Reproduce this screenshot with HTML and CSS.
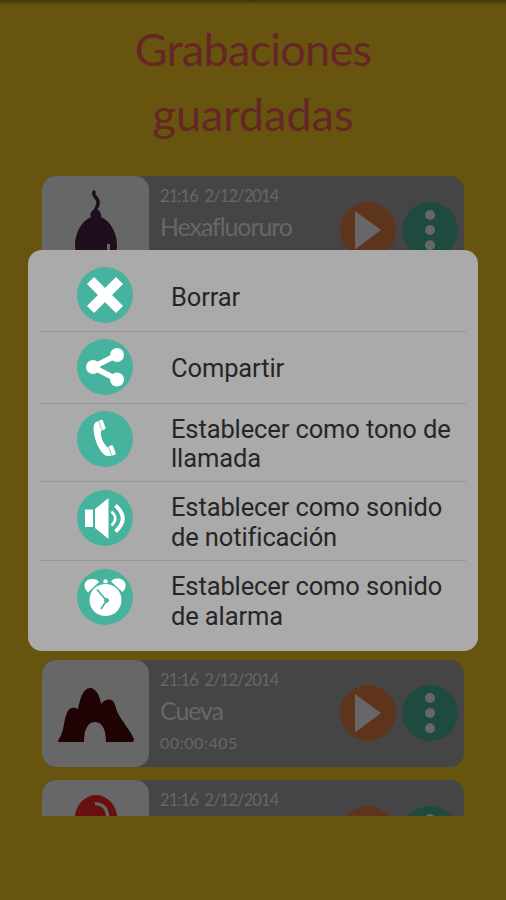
FILE: index.html
```
<!DOCTYPE html>
<html lang="es">
<head>
<meta charset="utf-8">
<title>Grabaciones guardadas</title>
<link rel="stylesheet" href="styles.css">
</head>
<body>
<svg class="defs" width="0" height="0">
  <symbol id="play" viewBox="0 0 56 56"><circle class="orange" cx="28" cy="28" r="28"/><path class="dim" d="M15 9v38.500L41 28z"/></symbol>
  <symbol id="more" viewBox="0 0 56 56"><circle class="green" cx="28" cy="28" r="28"/><g class="dim"><circle cx="28" cy="13" r="5"/><circle cx="28" cy="28" r="5"/><circle cx="28" cy="43.300" r="5"/></g></symbol>
</svg>
<main class="screen">
  <h1 class="title"><span class="t1">Grabaciones</span><br><span class="t2">guardadas</span></h1>
  <section class="list">
    <article class="card first">
      <div class="thumb"><svg viewBox="0 0 107 107"><path d="M52 16c-2 5 6 6 4 12-1 4-3 5-4 10" fill="none" stroke="#200e1e" stroke-width="3.500" stroke-linecap="round"/><path fill="#200e1e" d="M50 35c2-3 7-2 8 1 2 3 1 5 1 5 10 4 16 17 16 28 0 13-9 25-21 25S33 82 33 69c0-11 6-24 16-28-1-2-1-4 1-6z"/><path d="M66.500 68v10" stroke="#676767" stroke-width="3"/></svg></div>
      <div class="info"><div class="date">21:16&nbsp; 2/12/2014</div><div class="name">Hexafluoruro</div></div>
      <div class="actions"><svg><use href="#play"/></svg><svg><use href="#more"/></svg></div>
    </article>
    <article class="card cave">
      <div class="thumb"><svg viewBox="0 0 107 107"><path fill="#200304" d="M18 82c-3 0-2-2-1-3 6-10 4-17 8-26 2-6 7-6 11-4 2-10 5-21 12-21 6 0 10 8 11 16 5-6 12-6 14 1 3 11 7 14 11 21 4 5 6 9 8 13 0 2-1 3-2 3H64c0-11-3-20-11-20S42 71 42 82z"/></svg></div>
      <div class="info"><div class="date">21:16&nbsp; 2/12/2014</div><div class="name">Cueva</div><div class="time">00:00:405</div></div>
      <div class="actions"><svg><use href="#play"/></svg><svg><use href="#more"/></svg></div>
    </article>
    <article class="card balloon">
      <div class="thumb"><svg viewBox="0 0 107 107"><ellipse cx="54" cy="40" rx="21.500" ry="25" fill="#66100f"/><path d="M53 23.500c8 0 12 5 13 14" fill="none" stroke="#676767" stroke-width="3.200"/></svg></div>
      <div class="info"><div class="date">21:16&nbsp; 2/12/2014</div></div>
      <div class="actions"><svg><use href="#play"/></svg><svg><use href="#more"/></svg></div>
    </article>
  </section>
  <ul class="dialog">
    <li class="row"><svg viewBox="0 0 56 56"><circle class="teal" cx="28" cy="28" r="28"/><path d="M13.500 13.500l29 29M42.500 13.500L13.500 42.500" stroke="#fff" stroke-width="10"/></svg><span>Borrar</span></li>
    <li class="row"><svg viewBox="0 0 56 56"><circle class="teal" cx="28" cy="28" r="28"/><path d="M40 16L16 28l24 12.500" fill="none" stroke="#fff" stroke-width="5.500"/><g fill="#fff"><circle cx="40" cy="16" r="7"/><circle cx="16" cy="28" r="7"/><circle cx="40" cy="40.500" r="7"/></g></svg><span>Compartir</span></li>
    <li class="row tall"><svg viewBox="0 0 56 56"><circle class="teal" cx="28" cy="28" r="28"/><path fill="#fff" d="M20 10.500l4.500-1.800c.7-.2 1 0 1.300.7l2.700 7.300c.2.800 0 1.200-.7 1.500L24 20c-.7 6 2 12 6.300 16.200l4.200-2c.7-.3 1.100 0 1.400.6l2.800 7.200c.2.800 0 1.200-.7 1.500-4 2-8 2.500-11 0-7-7-10-17-10.500-26-.1-3 1-6 3.500-7z"/><path d="M21.500 10l3.500 9M31.300 35.500l3.500 9" stroke="#45b39d" stroke-width=".7"/></svg><span>Establecer como tono de llamada</span></li>
    <li class="row tall"><svg viewBox="0 0 56 56"><circle class="teal" cx="28" cy="28" r="28"/><path fill="#fff" d="M8 19.500h8v17.500H8zM18 19L31.500 8v41L18 38z"/><g fill="none" stroke="#fff"><path d="M34.500 21.500q7.500 7 0 14" stroke-width="2.500"/><path d="M38.500 15.500q14.500 13 0 26" stroke-width="4"/></g></svg><span>Establecer como sonido de notificación</span></li>
    <li class="row tall last"><svg viewBox="0 0 56 56"><circle class="teal" cx="28" cy="28" r="28"/><g fill="#fff"><path d="M11 23.500C5 18 7 10 15.500 10c3 0 5.500 1.200 6.500 3zM45.500 23c6-5.500 3-13.500-5-13.500-3 0-5.500 1.200-6.500 3z"/><circle cx="28.500" cy="12.500" r="2.200"/><circle cx="28.500" cy="31" r="16.500" stroke="#45b39d" stroke-width="1"/></g><path d="M20 20.500L29.500 31.500 24 40" fill="none" stroke="#45b39d" stroke-width="1.700"/><circle class="teal" cx="29.500" cy="31.500" r="2.400"/></svg><span>Establecer como sonido de alarma</span></li>
  </ul>
</main>
</body>
</html>
```
FILE: styles.css
```
* { box-sizing: border-box; }
body { margin: 0; background: #67550f; }
.defs { position: absolute; }
.screen { position: relative; width: 506px; height: 900px; overflow: hidden; padding: 17px 42px 0; background: linear-gradient(#3f350c, #67550f 5px); font-family: Lato, sans-serif; }
.title { margin: 0; height: 159px; font-size: 45px; line-height: 65px; font-weight: 400; color: #652625; text-align: center; white-space: nowrap; }
.t1 { letter-spacing: -.75px; }
.list { height: 639.500px; overflow: hidden; display: grid; grid-auto-rows: 107px; row-gap: 13.900px; align-content: start; }
.cave { grid-row: 5; }
.balloon { grid-row: 6; }
.card { display: flex; background: #454545; border-radius: 14px; overflow: hidden; padding-right: 6px; color: #676767; }
.thumb { width: 107px; height: 107px; border-radius: 14px; background: #676767; }
.thumb svg { display: block; }
.info { flex: 1; padding: 9px 0 0 11px; white-space: nowrap; }
.date { font-size: 16.500px; line-height: 22px; letter-spacing: -.9px; }
.name { font-size: 25px; line-height: 38px; letter-spacing: -1.100px; }
.time { font-size: 16px; line-height: 28px; letter-spacing: .55px; }
.actions { display: flex; gap: 6px; align-items: center; }
.actions svg { width: 56px; height: 56px; }
.orange { fill: #5e341c; }
.green { fill: #1f4a40; }
.dim { fill: #676767; }
.teal { fill: #45b39d; }
.dialog { position: absolute; left: 28px; top: 249.500px; width: 450px; height: 401px; margin: 0; padding: 10.500px 12px; list-style: none; background: #aaa; border-radius: 14px; color: #262626; font: 25.500px/29.500px Roboto, sans-serif; }
.row { display: flex; align-items: center; height: 71.800px; border-bottom: 1px solid #979797; padding-left: 37px; gap: 38px; }
.row svg { flex: none; width: 56px; height: 56px; }
.row span { letter-spacing: -.12px; padding-top: 4px; }
.tall { height: 78.800px; align-items: flex-start; padding-top: 7.500px; }
.tall span { padding-top: 3.500px; }
.last { border-bottom: 0; }
```
